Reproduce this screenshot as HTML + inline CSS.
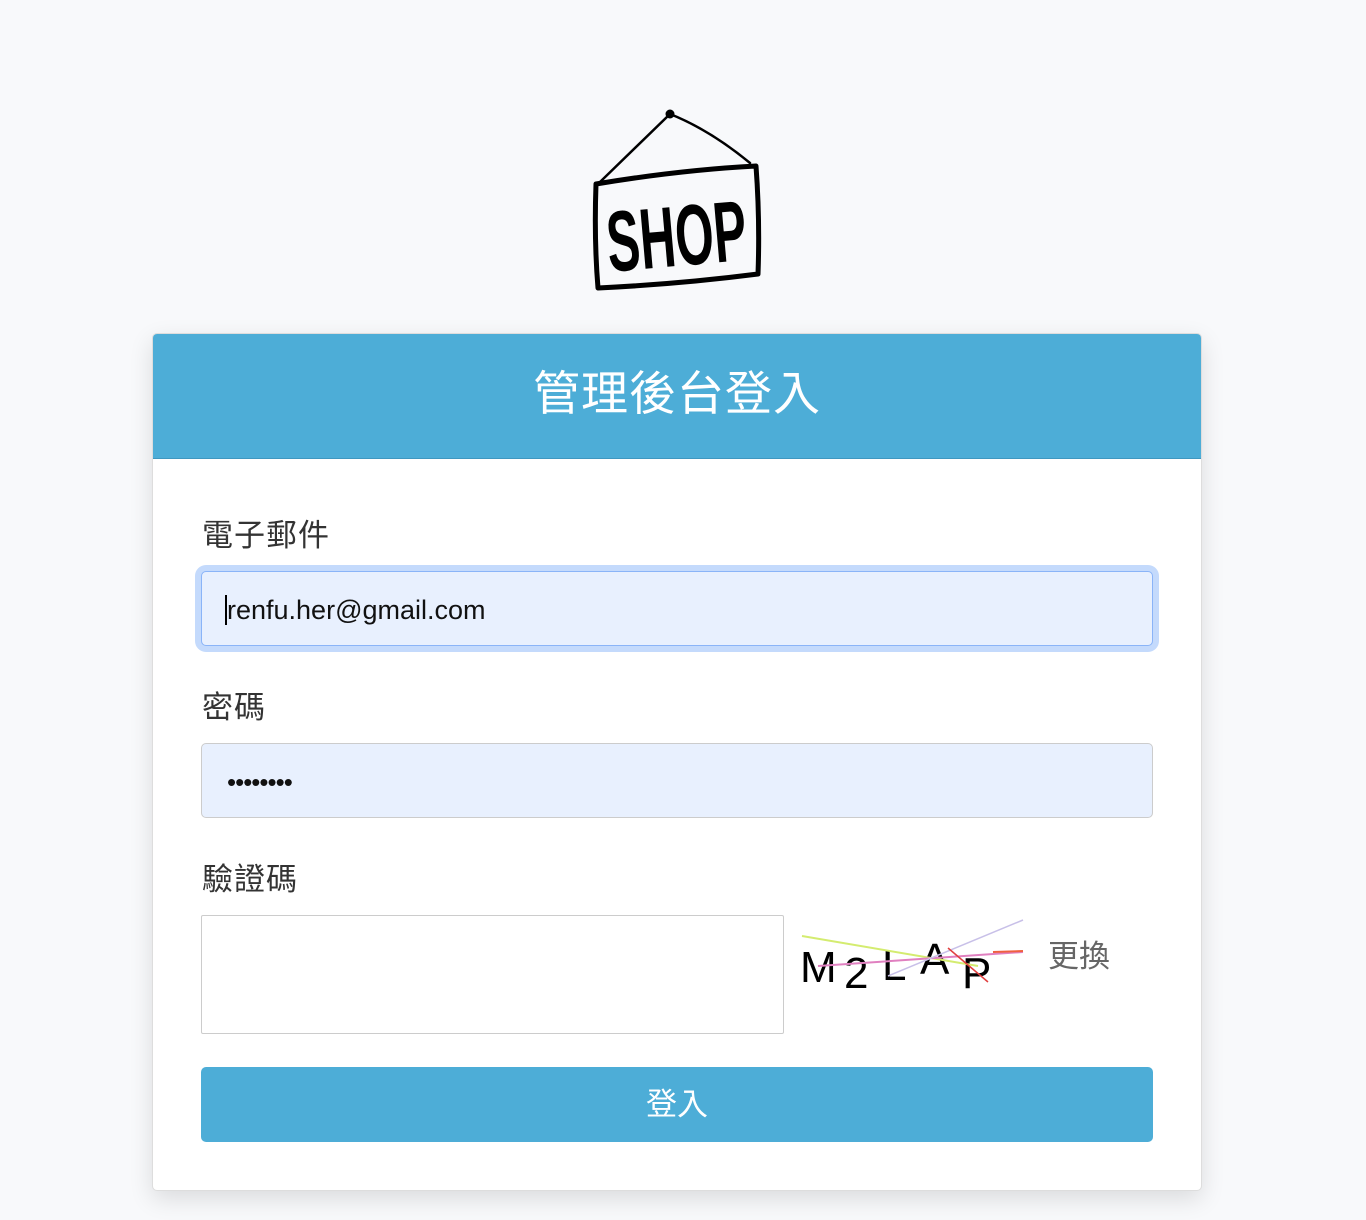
<!DOCTYPE html>
<html><head><meta charset="utf-8"><style>
body{margin:0;background:#f8f9fb;width:1366px;height:1220px;position:relative;font-family:"Liberation Sans","Noto Sans CJK TC",sans-serif;overflow:hidden}
.card{position:absolute;left:152px;top:333px;width:1050px;height:858px;background:#fff;border:1px solid #ddd;border-radius:5px;box-shadow:0 8px 24px rgba(0,0,0,.12);box-sizing:border-box;overflow:hidden}
.hd{height:124px;background:#4dadd7;border-bottom:1px solid #3f97c0;color:#fff;font-size:47px;text-align:center;line-height:120px;letter-spacing:1px}
.lbl{position:absolute;left:49px;font-size:31px;color:#333;letter-spacing:1px}
.in{position:absolute;left:48px;width:952px;height:75px;box-sizing:border-box;border:1px solid #ccc;border-radius:5px;background:#e8f0fe;font-size:27px;padding-left:25px;line-height:76px;color:#111}
</style></head><body>
<svg style="position:absolute;left:588px;top:104px" width="180" height="192" viewBox="588 104 180 192" fill="none" stroke="#000" stroke-linecap="round" stroke-linejoin="round">
<circle cx="670" cy="114" r="4" fill="#000"/>
<path d="M600 182 L670 114 Q710 130 750 163" stroke-width="2.5"/>
<path d="M596 184 Q680 170 756 166 Q760 220 758 274 Q680 284 598 288 Q594 240 596 184 Z" stroke-width="5"/>
<text x="606" y="266" font-family="Liberation Sans Narrow, Liberation Sans" font-size="86" font-weight="bold" fill="#000" stroke="none" transform="rotate(-5 675 230)" textLength="140" lengthAdjust="spacingAndGlyphs">SHOP</text>
</svg>
<div class="card">
<div class="hd">管理後台登入</div>
<div class="lbl" style="top:176px">電子郵件</div>
<div class="in" style="top:237px;border-color:#8ab4f8;box-shadow:0 0 0 6px #c4dafc"><span style="border-left:2px solid #000;margin-left:-2px"></span>renfu.her@gmail.com</div>
<div class="lbl" style="top:348px">密碼</div>
<div class="in" style="top:409px;font-size:26px;letter-spacing:-1px">••••••••</div>
<div class="lbl" style="top:520px">驗證碼</div>
<div class="in" style="top:581px;width:583px;height:119px;background:#fff;border-radius:2px"></div>
<svg style="position:absolute;left:645px;top:582px" width="230" height="80">
<text y="66" font-family="Liberation Sans" font-size="44" fill="#000"><tspan x="2">M</tspan><tspan x="46" y="72">2</tspan><tspan x="84" y="64">L</tspan><tspan x="122" y="58">A</tspan><tspan x="164" y="72">P</tspan></text>
<line x1="4" y1="20" x2="180" y2="50" stroke="#d4ec70" stroke-width="2"/>
<line x1="20" y1="50" x2="225" y2="36" stroke="#e080c0" stroke-width="2"/>
<line x1="90" y1="60" x2="225" y2="4" stroke="#c8c0e8" stroke-width="1.5"/>
<line x1="150" y1="32" x2="190" y2="66" stroke="#e04040" stroke-width="1.5"/>
<line x1="195" y1="36" x2="225" y2="35" stroke="#f06040" stroke-width="2"/>
</svg>
<div style="position:absolute;left:895px;top:597px;font-size:31px;color:#666">更換</div>
<div style="position:absolute;left:48px;top:733px;width:952px;height:75px;background:#4dadd7;border-radius:5px;color:#fff;font-size:31px;text-align:center;line-height:75px">登入</div>
</div>
</body></html>
